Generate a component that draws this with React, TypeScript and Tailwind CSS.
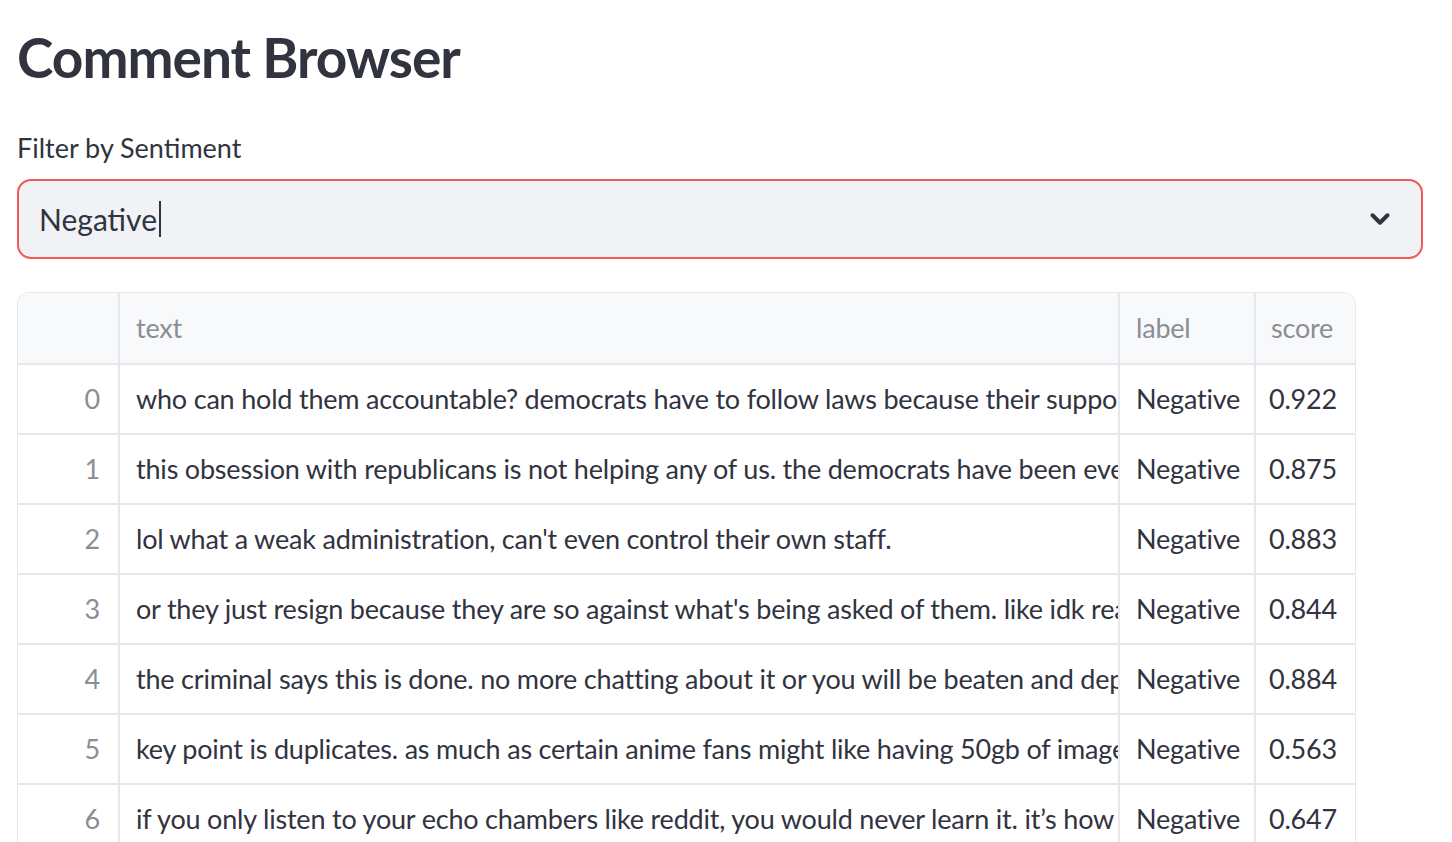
import { ChevronDown } from "lucide-react";

const rows = [
  { text: "who can hold them accountable? democrats have to follow laws because their supporters actually care about that", score: "0.922" },
  { text: "this obsession with republicans is not helping any of us. the democrats have been everything they accuse the other side of", score: "0.875" },
  { text: "lol what a weak administration, can't even control their own staff.", score: "0.883" },
  { text: "or they just resign because they are so against what's being asked of them. like idk really what else they could do", score: "0.844" },
  { text: "the criminal says this is done. no more chatting about it or you will be beaten and deported, that's the message", score: "0.884" },
  { text: "key point is duplicates. as much as certain anime fans might like having 50gb of images of the same thing", score: "0.563" },
  { text: "if you only listen to your echo chambers like reddit, you would never learn it. it’s how they keep you in line", score: "0.647" },
  { text: "nobody asked for this and nobody wants it, yet here we are again with the same old excuses", score: "0.791" },
];

export default function App() {
  return (
    <div
      className="h-[842px] overflow-hidden bg-white px-[17px] text-[#31333f]"
      style={{ fontFamily: "Lato, 'Noto Sans', sans-serif" }}
    >
      <h1 className="pt-[23px] text-[55px] font-bold leading-[68px] tracking-[-1px]">Comment Browser</h1>

      <div className="mt-[40px] text-[27px] leading-[34px]">Filter by Sentiment</div>

      <div className="mt-[14px] mr-[12px] flex h-[80px] items-center justify-between rounded-[14px] border-2 border-[#ee5a55] bg-[#f0f2f6] pl-[20px] pr-[26px]">
        <div className="flex items-center text-[30px]">
          <span>Negative</span>
          <span className="ml-[2px] h-[36px] w-[2px] bg-[#31333f]" />
        </div>
        <ChevronDown className="h-[30px] w-[30px] text-[#31333f]" strokeWidth={3.2} />
      </div>

      <div className="mt-[33px] w-[1339px] overflow-hidden rounded-t-[12px] border border-[#e6e7ea] text-[27px] tracking-[-0.2px]">
        <div className="flex h-[72px] items-center border-b-2 border-[#e6e7ea] bg-[#f8f9fb] text-[#8b8d95]">
          <div className="h-full w-[102px] border-r-2 border-[#e6e7ea]" />
          <div className="flex h-full w-[1000px] items-center border-r-2 border-[#e6e7ea] pl-[16px]">text</div>
          <div className="flex h-full w-[136px] items-center border-r-2 border-[#e6e7ea] pl-[16px]">label</div>
          <div className="flex h-full flex-1 items-center pl-[15px]">score</div>
        </div>
        {rows.map((r, i) => (
          <div key={i} className="flex h-[70px] items-center border-b-2 border-[#e6e7ea]">
            <div className="flex h-full w-[102px] items-center justify-end border-r-2 border-[#e6e7ea] pr-[18px] text-[#8b8d95]">
              {i}
            </div>
            <div className="flex h-full w-[1000px] items-center overflow-hidden whitespace-nowrap border-r-2 border-[#e6e7ea] pl-[16px]">
              {r.text}
            </div>
            <div className="flex h-full w-[136px] items-center border-r-2 border-[#e6e7ea] pl-[16px]">Negative</div>
            <div className="flex h-full flex-1 items-center justify-end pr-[18px]">{r.score}</div>
          </div>
        ))}
      </div>
    </div>
  );
}
